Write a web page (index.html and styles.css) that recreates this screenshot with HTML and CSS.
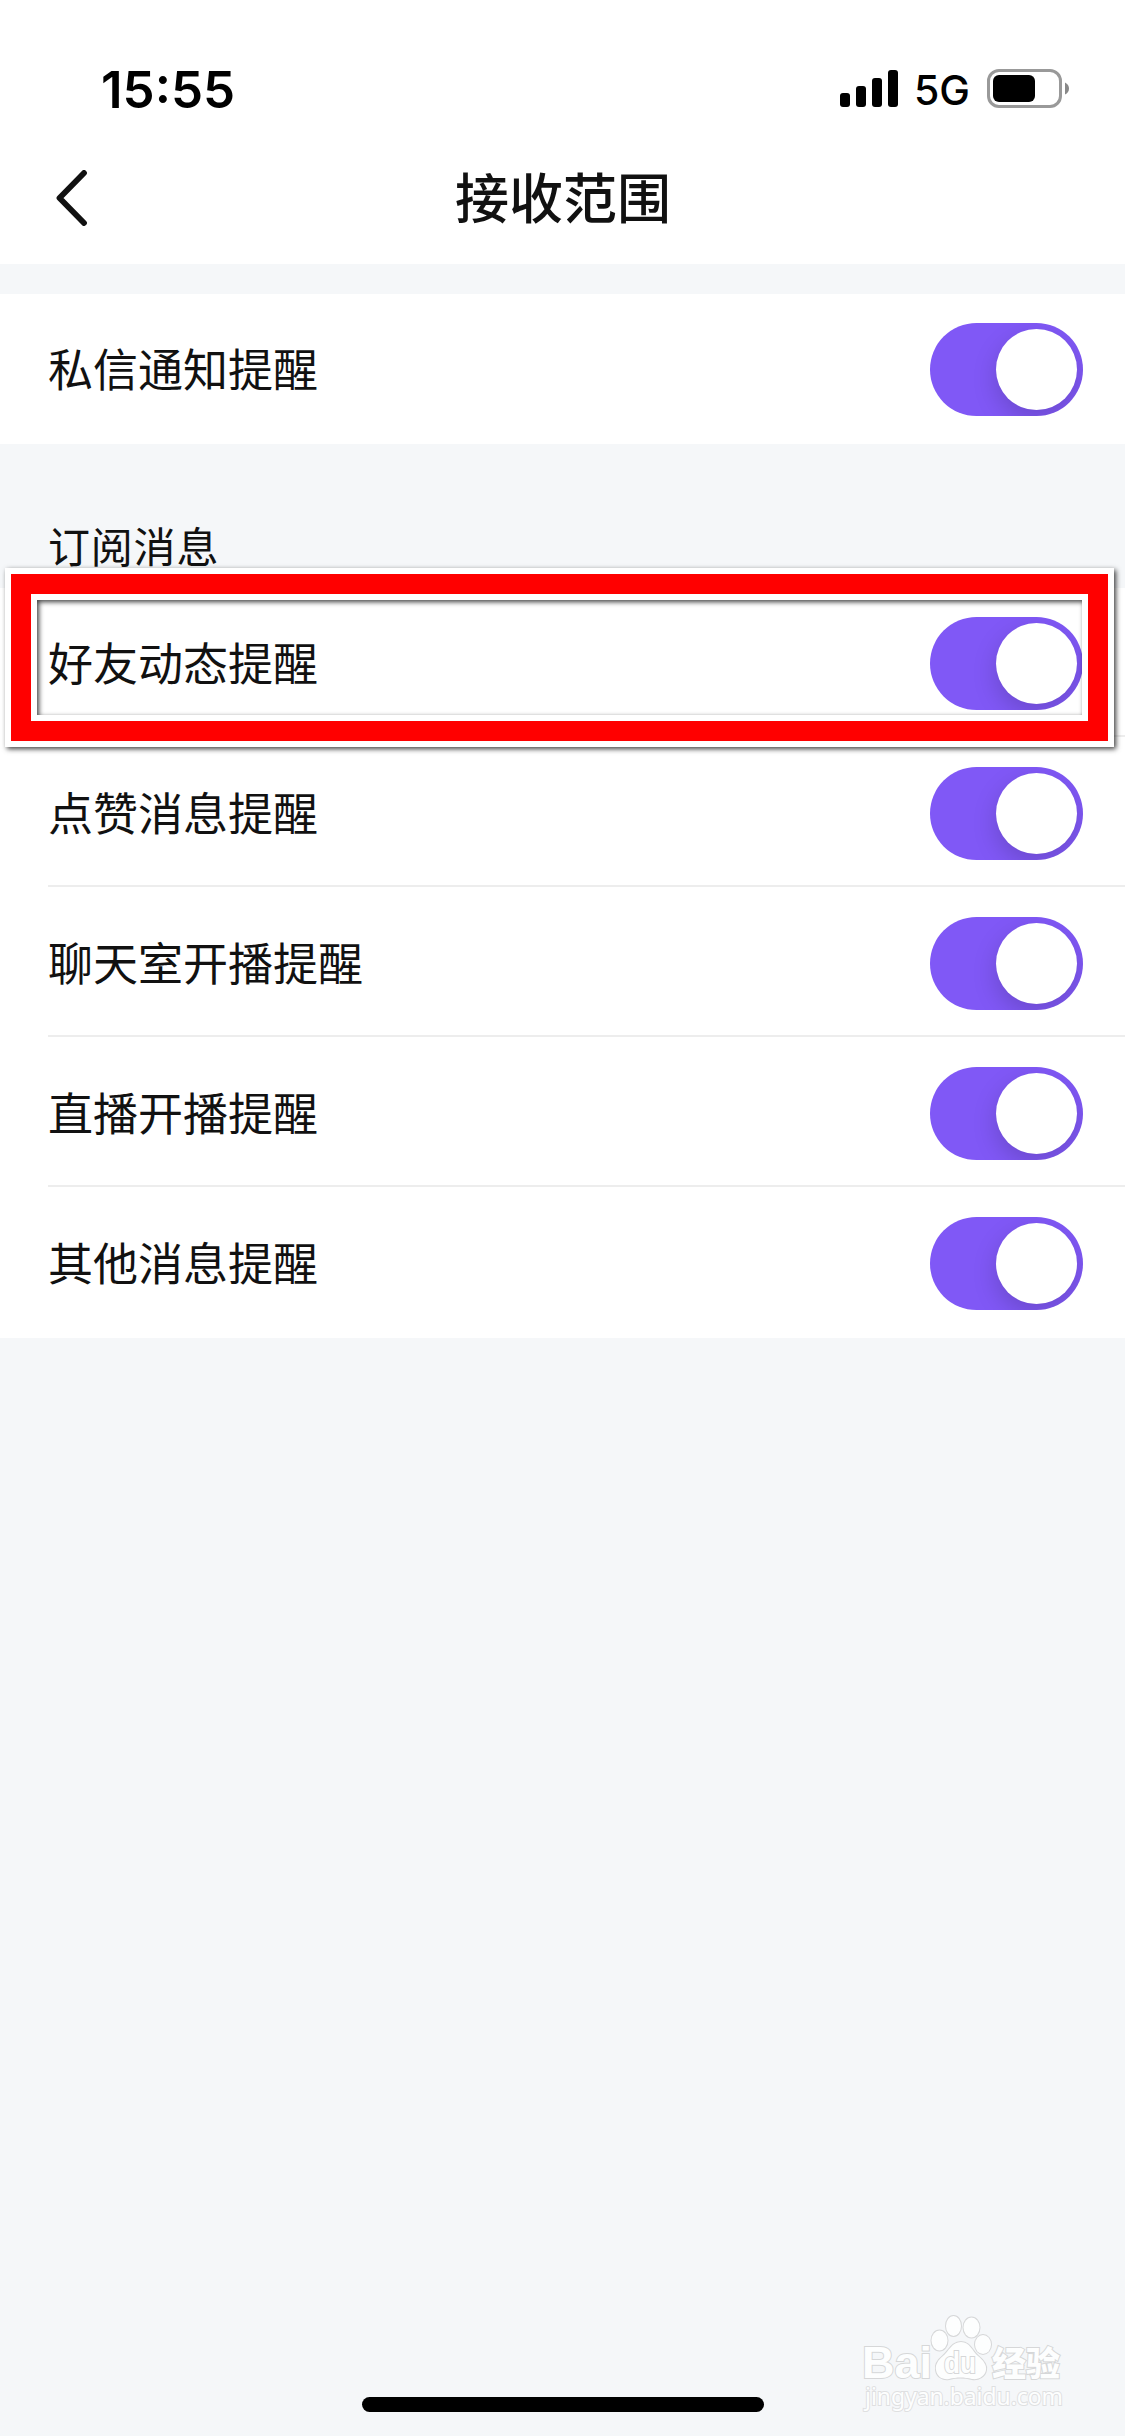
FILE: index.html
```html
<!DOCTYPE html>
<html lang="zh-CN">
<head>
<meta charset="utf-8">
<title>接收范围</title>
<link rel="stylesheet" href="styles.css">
</head>
<body>
<div class="screen">
  <header class="top">
    <div class="status">
      <span class="time">15:55</span>
      <div class="status-icons">
        <svg class="signal" width="58" height="37" viewBox="0 0 58 37"><rect y="23" width="10" height="14" rx="3"/><rect x="16" y="16" width="10" height="21" rx="3"/><rect x="32" y="8" width="10" height="29" rx="3"/><rect x="48" y="0" width="10" height="37" rx="3"/></svg>
        <span class="network">5G</span>
        <svg class="battery" width="82" height="39" viewBox="0 0 82 39"><rect x="1.5" y="1.5" width="72" height="36" rx="10.5" fill="none" stroke="#999" stroke-width="3"/><rect x="6" y="6" width="42" height="27" rx="6"/><path d="M78 13.500q4 2 4 6t-4 6z" fill="#888"/></svg>
      </div>
    </div>
    <nav class="nav">
      <svg class="back" width="32" height="56" viewBox="0 0 32 56"><path d="M28 3 3.500 28 28 53" fill="none" stroke="#111" stroke-width="5.800" stroke-linecap="round" stroke-linejoin="round"/></svg>
      <h1 class="title">接收范围</h1>
    </nav>
  </header>

  <section class="group first">
    <div class="row"><span class="label">私信通知提醒</span><i class="switch"></i></div>
  </section>

  <h2 class="caption">订阅消息</h2>
  <section class="group">
    <div class="row"><span class="label">好友动态提醒</span><i class="switch"></i><div class="highlight"><div class="band"><div class="inner"></div></div></div></div>
    <div class="row"><span class="label">点赞消息提醒</span><i class="switch"></i></div>
    <div class="row"><span class="label">聊天室开播提醒</span><i class="switch"></i></div>
    <div class="row"><span class="label">直播开播提醒</span><i class="switch"></i></div>
    <div class="row"><span class="label">其他消息提醒</span><i class="switch"></i></div>
  </section>

  <svg class="watermark" width="230" height="120" viewBox="-10 0 230 120">
    <g class="mark">
      <text class="brand" x="2" y="68" textLength="70" lengthAdjust="spacingAndGlyphs">Bai</text>
      <ellipse cx="79.500" cy="30.500" rx="8" ry="10"/>
      <ellipse cx="93.500" cy="16" rx="7.500" ry="10"/>
      <ellipse cx="111.500" cy="17.500" rx="8" ry="10"/>
      <ellipse cx="123" cy="34.500" rx="8" ry="9.500"/>
      <path d="M101 32c-9 0-12 9-18 14-5 4-8 9-7 14 1 7 7 10 13 9 8-2 15-2 23 0 7 1 13-3 14-9 1-5-3-10-8-14-6-5-8-14-17-14z"/>
      <text class="du" x="84" y="63" textLength="32" lengthAdjust="spacingAndGlyphs">du</text>
      <text class="cn" x="132" y="66" textLength="68" lengthAdjust="spacingAndGlyphs">经验</text>
      <text class="url" x="5" y="95" textLength="198" lengthAdjust="spacingAndGlyphs">jingyan.baidu.com</text>
    </g>
  </svg>
  <div class="home"></div>
</div>
</body>
</html>
```

FILE: styles.css
```css
* { box-sizing: border-box; }
body { margin: 0; }
.screen {
  position: relative;
  width: 1125px;
  height: 2436px;
  overflow: hidden;
  background: #f5f7f9;
  color: #111;
  font-family: "Noto Sans CJK SC", sans-serif;
}
.top { height: 264px; background: #fff; }
.status {
  display: flex;
  justify-content: space-between;
  height: 132px;
  padding: 60px 56px 0 101px;
  color: #000;
  font-family: Inter, sans-serif;
}
.time { font-size: 51px; line-height: 60px; font-weight: 600; }
.status-icons { display: flex; align-items: flex-start; }
.signal { margin-top: 10px; }
.network {
  width: 89px;
  padding-left: 16px;
  font-size: 41px;
  line-height: 61px;
  font-weight: 500;
}
.battery { margin-top: 9px; }
.nav {
  display: grid;
  grid-template-columns: 1fr auto 1fr;
  align-items: center;
  height: 132px;
  padding: 0 55px 0 56px;
}
.title {
  margin: 0 0 4px;
  font-size: 54px;
  line-height: 128px;
  font-weight: 500;
}
.group { background: #fff; }
.first { margin-top: 30px; }
.row {
  position: relative;
  display: flex;
  align-items: center;
  justify-content: space-between;
  height: 150px;
  padding: 0 42px 0 48px;
  font-size: 45px;
}
.label { margin-bottom: 3px; }
.row + .row::before {
  content: "";
  position: absolute;
  inset: -3px 0 auto 48px;
  height: 2px;
  background: #ededed;
}
.switch {
  display: flex;
  justify-content: flex-end;
  width: 153px;
  height: 93px;
  padding: 6px;
  margin-top: 1px;
  border-radius: 47px;
  background: #8058f6;
  overflow: hidden;
}
.switch::before {
  content: "";
  width: 81px;
  height: 81px;
  border-radius: 50%;
  background: #fff;
  box-shadow: 0 9px 24px rgba(0, 0, 0, .17);
}
.caption {
  height: 144px;
  margin: 0;
  padding: 70px 48px 0;
  font-size: 42px;
  line-height: 62px;
  font-weight: 400;
  letter-spacing: .8px;
}
.highlight {
  position: absolute;
  z-index: 2;
  left: 5px;
  top: -20px;
  width: 1109px;
  height: 179px;
  border: 6px solid #fff;
  box-shadow: 2px 2px 5px rgba(0, 0, 0, .75);
}
.band { height: 100%; border: 20px solid #f00; }
.inner {
  height: 100%;
  border: 6px solid #fff;
  position: relative;
}
.inner::after {
  content: "";
  position: absolute;
  inset: 0;
  box-shadow: inset 2px 2px 5px rgba(0, 0, 0, .75);
}
.watermark { position: absolute; left: 850px; top: 2310px; }
.mark { fill: #fdfefe; stroke: #d6d7d8; stroke-width: 2px; paint-order: stroke fill; }
.brand { font: 700 45px "Liberation Sans", sans-serif; }
.du { font: 700 29px "Liberation Sans", sans-serif; }
.cn { font: 900 34px "Noto Sans CJK SC", sans-serif; }
.url { font: 400 24px "Noto Sans", sans-serif; stroke: #dfe0e1; }
.home {
  position: absolute;
  left: 362px;
  bottom: 24px;
  width: 402px;
  height: 15px;
  border-radius: 8px;
  background: #000;
}
```
